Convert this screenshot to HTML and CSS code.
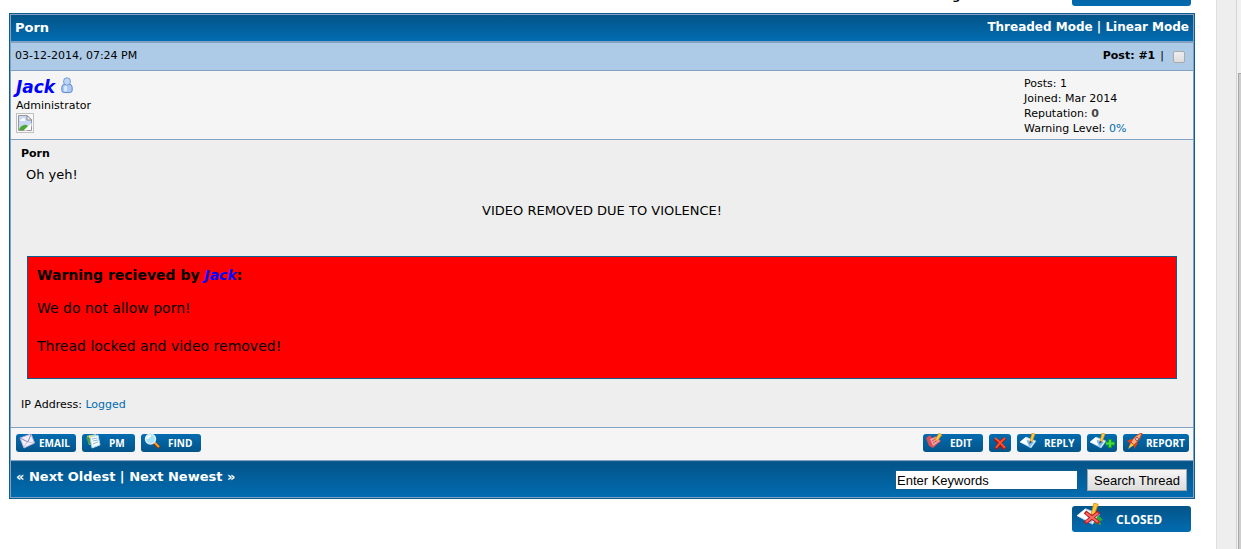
FILE: index.html
```html
<!DOCTYPE html>
<html lang="en">
<head>
  <meta charset="UTF-8" />
  <meta name="viewport" content="width=device-width, initial-scale=1.0"/>
  <title>Porn</title>
  <link rel="stylesheet" href="styles.css">
</head>
<body>

  <!-- icons shared by the buttons -->
  <svg class="defs" width="0" height="0">
    <defs>
      <symbol id="note" viewBox="0 0 17 17">
        <path d="M6 4 L16 8 L11 15 L0 9 Z" fill="#e8f5ff" stroke="#9ccbf0" stroke-width=".6"/>
        <path d="M7 7 L14 9 L10 14 L5 11 Z" fill="#7db9ec"/>
        <path d="M0 9 L6 4 L7 9 L9 13 Z" fill="#fff"/>
        <path d="M12 0 L15 1 L12 9 L10 8 Z" fill="#ffc933" stroke="#d98a1f" stroke-width=".6"/>
        <path d="M10 8 L12 9 L9 11 Z" fill="#345"/>
      </symbol>
    </defs>
  </svg>

  <main class="page">
    <div class="top-bar">
      <strong class="rating">g</strong>
      <a href="#" class="big-btn" aria-label="Closed thread">
        <svg width="30" height="24" viewBox="0 0 30 24">
          <use href="#note" width="28" height="24"/>
          <path d="M23 13 L28 18 L25 19 L26 23 L20 20 Z" fill="#2eae36"/>
        </svg>
      </a>
    </div>

    <div class="thread">
      <header class="thead">
        <strong class="title">Porn</strong>
        <strong><a href="#">Threaded Mode</a> | <a href="#">Linear Mode</a></strong>
      </header>

      <article class="post">
        <div class="tcat">
          <span>03-12-2014, 07:24 PM</span>
          <span class="post-number"><strong>Post: <a href="#">#1</a></strong> | <input type="checkbox" aria-label="Select post #1"></span>
        </div>

        <div class="author">
          <div>
            <div class="author-name">
              <a href="#" class="admin">Jack</a>
              <svg width="14" height="17" viewBox="0 0 14 18">
                <path d="M1.5 14 V11 Q1.5 8 4.5 7.5 H9.500 Q12.500 8 12.500 11 V14 Q12.500 16.500 10 16.500 H4 Q1.500 16.500 1.500 14 Z" fill="#a9c8f3" stroke="#5b82c8"/>
                <path d="M4 15 V11 Q4 9 6 9 H7 V15 Z" fill="#dceaff"/>
                <rect x="3.500" y="1" width="7" height="7.500" rx="3" fill="#bcd5f8" stroke="#6e91cf"/>
              </svg>
            </div>
            <div>Administrator</div>
            <svg class="avatar" width="18" height="20" viewBox="0 0 18 20">
              <rect x=".5" y=".5" width="17" height="19" fill="#f8f8f8" stroke="#c0c0c0"/>
              <path d="M2.500 2.500 H11 L15.500 7 V17.500 H2.500 Z" fill="#fff" stroke="#999"/>
              <path d="M3 3 H11 V7 H15 V11 L8 17 H3 Z" fill="#c7d9f7"/>
              <path d="M4 8 Q4 6 6 6 Q7 4 9 6 V8 Z" fill="#fff"/>
              <path d="M11 2.500 V7 H15.500 Z" fill="#fff" stroke="#888"/>
              <path d="M3 17 Q4 13 8 12 Q10 11 12 13 L8 17 Z" fill="#4ca832"/>
              <path d="M8 17.500 L15.500 10 V13 L11 17.500 Z" fill="#fff"/>
            </svg>
          </div>
          <div class="author-stats">
            <div>Posts: 1</div>
            <div>Joined: Mar 2014</div>
            <div>Reputation: <strong class="rep">0</strong></div>
            <div>Warning Level: <a href="#">0%</a></div>
          </div>
        </div>

        <div class="post-body">
          <strong>Porn</strong>
          <div class="message">
            <p>Oh yeh!</p>
            <p class="removed">VIDEO REMOVED DUE TO VIOLENCE!</p>
            <div class="warning">
              <strong>Warning recieved by <a href="#" class="admin">Jack</a>:</strong>
              <p>We do not allow porn!</p>
              <p>Thread locked and video removed!</p>
            </div>
          </div>
          <div>IP Address: <a href="#">Logged</a></div>
        </div>

        <div class="controls">
          <div class="btn-group">
            <a href="#" class="btn email">
              <svg width="17" height="17" viewBox="0 0 17 17">
                <path d="M1 5 L12 1 L15.500 10 L5 15 Z" fill="#f1effa" stroke="#b9b4d6"/>
                <path d="M1 5 L9 9 L12 1" fill="none" stroke="#8d84b5"/>
                <path d="M9 9 L15 10 M8 9 L5 14" stroke="#c9c4e2"/>
              </svg>
              EMAIL
            </a>
            <a href="#" class="btn pm">
              <svg width="17" height="17" viewBox="0 0 17 17">
                <path d="M2 3 L11 1 L12 9 L4 12 Z" fill="#b9e29b"/>
                <path d="M1 5 L6 2 L6 12 L4 11 Z" fill="#4a9b50"/>
                <path d="M5 4 L13 2 L15 12 L7 15 Z" fill="#f5fbff" stroke="#a9d2f1"/>
                <path d="M7 6 L12 5 M8 8 L13 7 M8 11 L13 9" stroke="#9ab7d4"/>
                <path d="M4 4 L6 3" stroke="#ffe562" stroke-width="2"/>
              </svg>
              PM
            </a>
            <a href="#" class="btn find">
              <svg width="17" height="17" viewBox="0 0 17 17">
                <path d="M10 10 L15 15" stroke="#7a3b10" stroke-width="3"/>
                <path d="M10 9 L15 14" stroke="#ff9d26" stroke-width="2"/>
                <circle cx="6.500" cy="6" r="5" fill="#a7e1fa" stroke="#d6edfa" stroke-width="1.500"/>
                <path d="M3 6 Q4 3 7 3" stroke="#fff" stroke-width="2" fill="none"/>
              </svg>
              FIND
            </a>
          </div>
          <div class="btn-group">
            <a href="#" class="btn edit">
              <svg width="17" height="17" viewBox="0 0 17 17">
                <path d="M0 5 L4 2 L6 5 L10 3 L15 8 L7 15 L3 13 Z" fill="#d95058"/>
                <path d="M4 6 L10 4 L14 8 L7 13 Z" fill="#f2a0a3"/>
                <path d="M6 8 L11 5 M7 10 L12 7" stroke="#c8525b"/>
                <path d="M13 0 L16 2 L11 8 L9 7 Z" fill="#ffc933" stroke="#d98a1f" stroke-width=".6"/>
              </svg>
              EDIT
            </a>
            <a href="#" class="btn delete" aria-label="Delete">
              <svg width="14" height="14" viewBox="0 0 14 14">
                <path d="M2 3 Q6 6 12 13 M12 2 Q7 6 3 13" fill="none" stroke="#a41510" stroke-width="3.500"/>
                <path d="M2 2 Q6 5 12 12 M12 2 Q7 6 3 12" fill="none" stroke="#ff5130" stroke-width="2"/>
              </svg>
            </a>
            <a href="#" class="btn reply">
              <svg width="17" height="17"><use href="#note"/></svg>
              REPLY
            </a>
            <a href="#" class="btn quote" aria-label="Quote">
              <svg width="26" height="17" viewBox="0 0 26 17">
                <use href="#note" width="17" height="17"/>
                <path d="M20 6 V15 M15.500 10.500 H25" stroke="#159b20" stroke-width="4"/>
                <path d="M20 7 V14 M16 10.500 H24" stroke="#48dd43" stroke-width="2"/>
              </svg>
            </a>
            <a href="#" class="btn report">
              <svg width="17" height="17" viewBox="0 0 17 17">
                <path d="M5 6 L1 8 L4 10 L3 14 L8 12 L8 16 L12 10 Z" fill="#ed3d17"/>
                <path d="M5 9 Q9 2 16 0 Q15 6 8 12 Z" fill="#ffad81" stroke="#d3431b"/>
                <path d="M5 10 L8 12 L2 16 Z" fill="#ffce36"/>
                <circle cx="11" cy="6" r="1.500" fill="#ddeaff" stroke="#913519" stroke-width=".8"/>
              </svg>
              REPORT
            </a>
          </div>
        </div>
      </article>

      <footer class="tfoot">
        <strong>&laquo; <a href="#">Next Oldest</a> | <a href="#">Next Newest</a> &raquo;</strong>
        <form class="search">
          <input type="text" value="Enter Keywords" aria-label="Enter Keywords">
          <button type="button">Search Thread</button>
        </form>
      </footer>
    </div>

    <div class="bottom-bar">
      <a href="#" class="big-btn">
        <svg width="30" height="24" viewBox="0 0 30 24">
          <use href="#note" width="28" height="24"/>
          <path d="M23 12 L28 17 L25 18 L26 22 L19 20 Z" fill="#2eae36"/>
          <path d="M10 9 L24 20 M24 9 L10 20" stroke="#b91f1f" stroke-width="4"/>
          <path d="M11 10 L23 19 M23 10 L11 19" stroke="#ff6b66" stroke-width="2"/>
        </svg>
        CLOSED
      </a>
    </div>
  </main>

  <div class="gutter"></div>
  <div class="scrollbar"><div class="thumb"></div></div>

</body>
</html>
```
FILE: styles.css
```css
* {
  box-sizing: border-box;
}

body {
  display: flex;
  min-height: 100vh;
  margin: 0;
  background: #fff;
  color: #000;
  font-family: Verdana, "DejaVu Sans", sans-serif;
  font-size: 11px;
  line-height: 15px;
}

a {
  color: #026cb1;
  text-decoration: none;
}

p {
  margin: 0;
}

svg {
  flex: none;
}

.defs {
  position: absolute;
}

.page {
  flex: 1;
  padding: 0 21px 0 9px;
}

.gutter {
  width: 20px;
  background: #eee;
  border-left: 1px solid #e0e0e0;
}

.scrollbar {
  width: 5px;
  padding: 73px 0 0 1px;
  background: #f1f1f1;
  border-left: 1px solid #d4d4d4;
}

.thumb {
  height: 100%;
  background: #cdcdcd;
  border: 1px solid #a8a8a8;
  border-right: 0;
  border-bottom: 0;
}

.top-bar {
  display: flex;
  justify-content: flex-end;
  align-items: flex-end;
  height: 13px;
  padding: 0 4px 7px 0;
  gap: 112px;
  overflow: hidden;
}

.rating {
  line-height: 19px;
}

/* thread table */
.thread {
  border: 1px solid #0f5c8e;
  outline: 1px solid #81a2c4;
  outline-offset: -2px;
  padding: 1px;
}

.thead,
.tfoot {
  display: flex;
  justify-content: space-between;
  background: linear-gradient(#035488, #026cb1);
  color: #fff;
  font-size: 12px;
}

.thead {
  padding: 5px 4px 6px;
  border-bottom: 2px solid #81a2c4;
}

.thead a,
.tfoot a {
  color: #fff;
}

.title,
.tfoot {
  font-size: 13px;
}

.tcat {
  display: flex;
  justify-content: space-between;
  padding: 5px 8px 7px 4px;
  background: #adcbe7;
  border-bottom: 1px solid #81a2c4;
}

.tcat a {
  color: #000;
}

.post-number {
  display: flex;
  align-items: center;
  gap: 5px;
}

.post-number input {
  appearance: none;
  width: 12px;
  height: 12px;
  margin: 2px 0 0 4px;
  background: linear-gradient(#eee, #ddd);
  border: 1px solid #aaa;
  border-radius: 2px;
}

.author {
  display: flex;
  justify-content: space-between;
  height: 69px;
  padding: 5px;
  background: #f5f5f5;
  border-bottom: 1px solid #81a2c4;
}

.author-name {
  display: flex;
  align-items: center;
  gap: 5px;
  height: 22px;
  font-size: 17px;
}

.author-name svg {
  margin-bottom: 4px;
}

.admin {
  color: #00f;
  font-weight: bold;
  font-style: italic;
}

.author .avatar {
  display: block;
}

.author-stats {
  width: 164px;
}

.rep {
  color: #444;
}

.post-body {
  padding: 6px 10px 15px;
  background: #eee;
  border-bottom: 1px solid #81a2c4;
}

.message {
  padding: 5px;
  font-size: 13px;
  line-height: 18px;
}

.removed {
  margin: 18px 0 36px;
  text-align: center;
}

.warning {
  margin: 0 1px 13px;
  padding: 9px 9px 3px;
  background: #f00;
  border: 1px solid #0f5c8e;
  font-size: 14px;
  line-height: 19px;
}

.warning p {
  margin: 14px 0 19px;
}

/* buttons under the post */
.controls {
  display: flex;
  justify-content: space-between;
  padding: 5px 4px 8px 5px;
  background: #f5f5f5;
  border-bottom: 1px solid #81a2c4;
}

.btn-group {
  display: flex;
  gap: 6px;
}

.btn,
.big-btn {
  display: flex;
  align-items: center;
  background: linear-gradient(#026cb1, #035488);
  border-radius: 3px;
  color: #fff;
  font-family: "Open Sans", sans-serif;
  font-size: 10px;
  font-weight: bold;
}

.btn {
  height: 18px;
  margin-top: 1px;
  padding-left: 3px;
  gap: 3px;
}

.email,
.find,
.edit {
  width: 60px;
}

.btn svg {
  margin-top: -4px;
}

.pm {
  width: 53px;
}

.pm,
.find,
.edit,
.reply {
  gap: 7px;
}

.delete {
  width: 22px;
  padding-left: 4px;
}

.delete svg {
  margin-top: 0;
}

.reply {
  width: 64px;
}

.quote {
  width: 30px;
}

.report {
  width: 66px;
}

.tfoot {
  padding: 7px 6px 6px 5px;
  border-top: 1px solid #0f5c8e;
}

.search {
  display: flex;
  align-items: center;
  gap: 9px;
}

.search input,
.search button {
  margin: 0;
  font-family: "Liberation Sans", Arial, sans-serif;
  font-size: 13px;
}

.search input {
  width: 183px;
  height: 20px;
  padding: 1px;
  background: #fff;
  border: 1px solid #0f5c8e;
}

.search button {
  width: 100px;
  height: 22px;
  padding: 0;
  background: linear-gradient(#f5f5f5, #ddd);
  border: 1px solid #a6a6a6;
}

.big-btn {
  width: 119px;
  height: 26px;
  padding-left: 3px;
  gap: 11px;
  background: linear-gradient(#035488, #026cb1);
  font-size: 12px;
}

.big-btn svg {
  margin-top: -8px;
}

.bottom-bar {
  display: flex;
  justify-content: flex-end;
  padding: 7px 4px 0 0;
}
```
